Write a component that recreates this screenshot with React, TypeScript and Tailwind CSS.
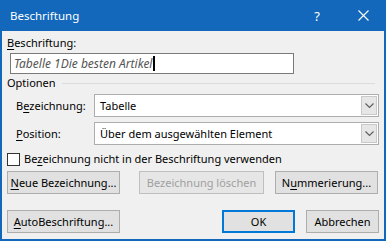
import React from 'react'

const font = { fontFamily: '"Noto Sans", "Segoe UI", sans-serif' }

function Chevron() {
  return (
    <svg width="9" height="6" viewBox="0 0 9 6" className="text-[#606060]">
      <path d="M0.5 0.5 L4.5 4.5 L8.5 0.5" fill="none" stroke="currentColor" strokeWidth="1.2" />
    </svg>
  )
}

function Select({ value }: { value: string }) {
  return (
    <div className="flex h-[23px] w-[285px] items-stretch border border-[#adadad] bg-white">
      <div className="flex flex-1 items-center pl-[5px] text-black">{value}</div>
      <div className="m-[1px] flex w-[16px] items-center justify-center border border-[#c9c9c9] bg-[#e6e6e6]">
        <Chevron />
      </div>
    </div>
  )
}

function Button({
  children,
  width,
  disabled,
  primary,
}: {
  children: React.ReactNode
  width: string
  disabled?: boolean
  primary?: boolean
}) {
  return (
    <div
      className={`flex h-[23px] items-center justify-center whitespace-nowrap ${width} ${
        primary
          ? 'border-2 border-[#0078d7] bg-[#e1e1e1]'
          : disabled
            ? 'border border-[#bfbfbf] bg-[#e6e6e6]'
            : 'border border-[#adadad] bg-[#e1e1e1]'
      } ${disabled ? 'text-[#a0a0a0]' : 'text-black'}`}
    >
      {children}
    </div>
  )
}

export default function App() {
  return (
    <div
      style={font}
      className="flex h-[241px] w-[386px] flex-col border-x-2 border-b-2 border-[#1368bc] bg-[#f0f0f0] text-[11px] leading-[16px] whitespace-nowrap"
    >
      {/* title bar */}
      <div className="-mx-[2px] flex h-[31px] items-center bg-[#1368bc] pl-[10px] text-[11.5px] text-white">
        <span className="flex-1">Beschriftung</span>
        <span className="w-[46px] text-center text-[13px]">?</span>
        <span className="flex w-[46px] items-center justify-center">
          <svg width="11" height="11" viewBox="0 0 11 11">
            <path d="M0.5 0.5 L10.5 10.5 M10.5 0.5 L0.5 10.5" stroke="white" strokeWidth="1.1" />
          </svg>
        </span>
      </div>

      <div className="flex flex-col pl-[5px] pr-[5px]">
        <div className="mt-[4px]">
          <span className="underline underline-offset-2">B</span>eschriftung:
        </div>
        <div className="ml-[3px] mt-[2px] flex h-[21px] w-[284px] items-center border border-[#7a7a7a] bg-white pl-[3px] text-[12px] italic text-[#555]">
          Tabelle 1Die besten Artikel
          <span className="ml-[1px] h-[15px] w-[2px] bg-black" />
        </div>

        {/* Optionen group */}
        <div className="mt-[1px] flex items-center">
          <span>Optionen</span>
          <div className="ml-[6px] mr-[4px] h-px flex-1 bg-[#dcdcdc]" />
        </div>

        <div className="mt-[3px] flex flex-col gap-[5px] pl-[9px]">
          <div className="flex items-center">
            <span className="w-[78px]">
              B<span className="underline underline-offset-2">e</span>zeichnung:
            </span>
            <Select value="Tabelle" />
          </div>
          <div className="flex items-center">
            <span className="w-[78px]">
              <span className="underline underline-offset-2">P</span>osition:
            </span>
            <Select value="Über dem ausgewählten Element" />
          </div>
        </div>

        <div className="mt-[6px] flex items-center">
          <div className="h-[13px] w-[13px] border border-[#333] bg-white" />
          <span className="ml-[4px]">
            Be<span className="underline underline-offset-2">z</span>eichnung nicht in der Beschriftung verwenden
          </span>
        </div>

        <div className="mt-[4px] flex items-center">
          <Button width="w-[113px]">
            <span className="underline underline-offset-2">N</span>eue Bezeichnung...
          </Button>
          <div className="ml-[19px]">
            <Button width="w-[125px]" disabled>
              Bezeichnung löschen
            </Button>
          </div>
          <div className="ml-[11px]">
            <Button width="w-[103px]">
              N<span className="underline underline-offset-2">u</span>mmerierung...
            </Button>
          </div>
        </div>

        <div className="mt-[16px] flex items-center">
          <Button width="w-[113px]">
            <span className="underline underline-offset-2">A</span>utoBeschriftung...
          </Button>
          <div className="ml-auto">
            <Button width="w-[73px]" primary>
              OK
            </Button>
          </div>
          <div className="ml-[11px]">
            <Button width="w-[73px]">Abbrechen</Button>
          </div>
        </div>
      </div>
    </div>
  )
}
